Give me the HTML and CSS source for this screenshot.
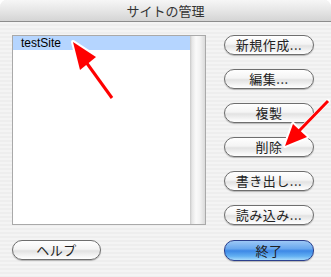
FILE: index.html
```html
<!DOCTYPE html>
<html lang="ja">
<head>
  <meta charset="utf-8">
  <title>サイトの管理</title>
  <link rel="stylesheet" href="styles.css">
</head>
<body>
  <div class="window">
    <header class="titlebar">サイトの管理</header>
    <main class="content">
      <div class="sitelist">
        <ul class="rows">
          <li class="row selected">testSite</li>
        </ul>
        <div class="scrollbar"></div>
      </div>

      <div class="actions">
        <button class="btn">新規作成...</button>
        <button class="btn">編集...</button>
        <button class="btn">複製</button>
        <button class="btn">削除</button>
        <button class="btn">書き出し...</button>
        <button class="btn">読み込み...</button>
      </div>

      <button class="btn help">ヘルプ</button>
      <button class="btn primary">終了</button>
    </main>

    <svg class="arrows" width="331" height="277" viewBox="0 0 331 277">
      <g class="halo">
        <line x1="112" y1="98" x2="86" y2="62"/>
        <polygon points="73,42 96,57 80,70"/>
        <line x1="328" y1="101" x2="299" y2="131"/>
        <polygon points="285,146 293,124 307,137"/>
      </g>
      <g class="ink">
        <line x1="112" y1="98" x2="86" y2="62"/>
        <polygon points="73,42 96,57 80,70"/>
        <line x1="328" y1="101" x2="299" y2="131"/>
        <polygon points="285,146 293,124 307,137"/>
      </g>
    </svg>
  </div>
</body>
</html>
```

FILE: styles.css
```css
html, body {
  margin: 0;
  padding: 0;
  background: #fff;
}

*, :after, :before {
  box-sizing: border-box;
}

.window {
  position: relative;
  width: 331px;
  height: 277px;
  overflow: hidden;
  border-radius: 7px 7px 0 0;
  background: repeating-linear-gradient(to bottom, #eeeeee 0, #eeeeee 2px, #f4f4f4 2px, #f4f4f4 4px);
  font-family: "Noto Sans CJK JP", "Liberation Sans", sans-serif;
}

.titlebar {
  height: 22px;
  border-bottom: 1px solid #8c8c8c;
  background: linear-gradient(to bottom, #f6f6f6 0%, #e6e6e6 50%, #d4d4d4 100%);
  color: #333;
  font-size: 13px;
  line-height: 21px;
  text-align: center;
}

.content {
  display: grid;
  grid-template-columns: 194px 90px;
  column-gap: 18px;
  row-gap: 15px;
  padding: 13px 0 0 12px;
}

.sitelist {
  display: flex;
  height: 190px;
  border: 1px solid #a9a9a9;
  background: #fff;
}

.rows {
  flex: 1;
  margin: 0;
  padding: 0;
  list-style: none;
}

.row {
  height: 14px;
  padding-left: 8px;
  font-family: "Liberation Sans", sans-serif;
  font-size: 12px;
  line-height: 14px;
  color: #000;
}

.row.selected {
  background: #b5d5ff;
}

.scrollbar {
  width: 15px;
  background: linear-gradient(to right, #c8c8c8 0, #e6e6e6 2px, #fafafa 6px, #f2f2f2 10px, #dadada 15px);
}

.actions {
  display: flex;
  flex-direction: column;
  gap: 14px;
}

.btn {
  width: 90px;
  height: 20px;
  padding: 0;
  border: 1px solid #6e6e6e;
  border-radius: 10px;
  background: linear-gradient(to bottom, #ffffff 0%, #f4f4f4 45%, #e2e2e2 55%, #f6f6f6 85%, #ffffff 100%);
  box-shadow: 0 1px 1px rgba(0, 0, 0, 0.25);
  color: #222;
  font-family: "Noto Sans CJK JP", sans-serif;
  font-size: 13px;
  line-height: 18px;
  letter-spacing: 0.5px;
}

.btn.help {
  width: 89px;
}

.btn.primary {
  height: 21px;
  border-color: #2b3f8c;
  background: linear-gradient(to bottom, #9cc8f6 0%, #6aa8ee 40%, #3d88e6 52%, #63b0f2 80%, #a6dbfb 100%);
}

.arrows {
  position: absolute;
  top: 0;
  left: 0;
  pointer-events: none;
}

.arrows .halo line,
.arrows .halo polygon {
  stroke: #fff;
  stroke-width: 4;
  stroke-linejoin: round;
  stroke-linecap: round;
  fill: #fff;
}

.arrows .ink line {
  stroke: #ff0000;
  stroke-width: 3;
}

.arrows .ink polygon {
  fill: #ff0000;
}
```
